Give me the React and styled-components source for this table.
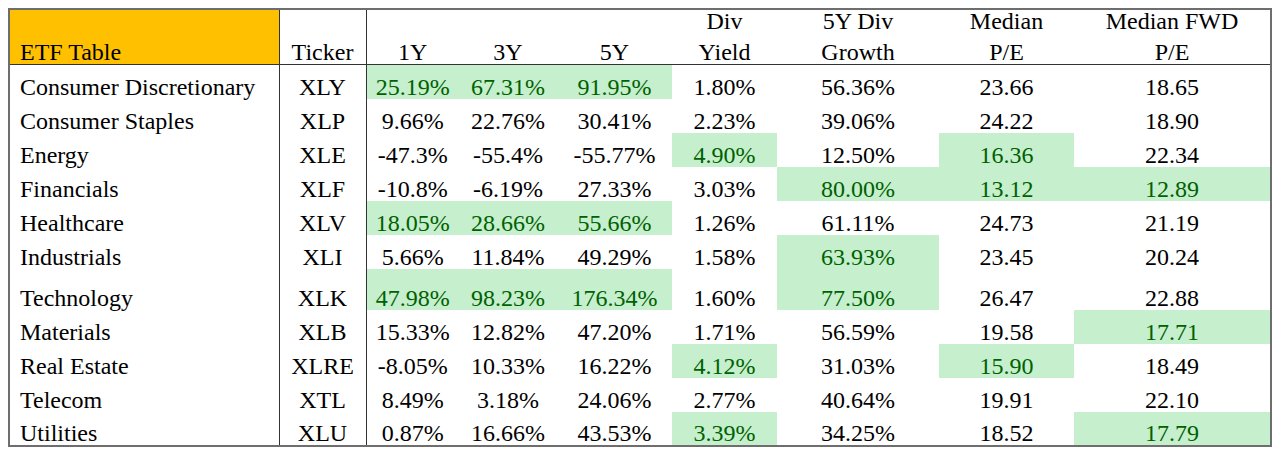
import React from 'react';
import styled, { createGlobalStyle } from 'styled-components';

const GlobalStyle = createGlobalStyle`
  body {
    margin: 8px;
    background: #fff;
    font-family: "Liberation Serif", "Times New Roman", serif;
    color: #000;
  }
`;

const Table = styled.table`
  border-collapse: collapse;
  table-layout: fixed;
  width: 1262px;
  border: 2px solid #6e6e6e;
  font-family: "Liberation Serif", "Times New Roman", serif;
  font-size: 24px;
  line-height: 23px;

  th,
  td {
    font-family: inherit;
    font-size: inherit;
  }
`;

const HeadRow = styled.tr`
  height: 54px;
  border-bottom: 1px solid #333;
`;

const BodyRow = styled.tr`
  height: ${(p) => (p.$tall ? 41 : 34)}px;
`;

const HeadCell = styled.th`
  font-weight: normal;
  vertical-align: bottom;
  line-height: 22px;
  padding: 0 0 1px;
  text-align: ${(p) => (p.$left ? 'left' : 'center')};
  background: ${(p) => (p.$accent ? '#ffc000' : 'transparent')};
  padding-left: ${(p) => (p.$left ? '10px' : '0')};
  border-right: ${(p) => (p.$divider ? '1px solid #333' : 'none')};
`;

const HeadLine = styled.span`
  display: block;
  & + & {
    margin-top: 9px;
  }
`;

const NameCell = styled.td`
  vertical-align: bottom;
  padding: 0 0 0 10px;
  white-space: nowrap;
  border-right: 1px solid #333;
`;

const TickerCell = styled.td`
  vertical-align: bottom;
  text-align: center;
  padding: 0;
  border-right: 1px solid #333;
`;

const ValueCell = styled.td`
  vertical-align: bottom;
  text-align: center;
  padding: 0;
  white-space: nowrap;
  background: ${(p) => (p.$good ? '#c6efce' : 'transparent')};
  color: ${(p) => (p.$good ? '#006100' : '#000')};
`;

const widths = [270, 87, 93, 98, 115, 105, 162, 135, 197];

const headers = [
  ['1Y'],
  ['3Y'],
  ['5Y'],
  ['Div', 'Yield'],
  ['5Y Div', 'Growth'],
  ['Median', 'P/E'],
  ['Median FWD', 'P/E'],
];

// values ending with * are the highlighted (best) cells
const rows = [
  ['Consumer Discretionary', 'XLY', '25.19%*', '67.31%*', '91.95%*', '1.80%', '56.36%', '23.66', '18.65'],
  ['Consumer Staples', 'XLP', '9.66%', '22.76%', '30.41%', '2.23%', '39.06%', '24.22', '18.90'],
  ['Energy', 'XLE', '-47.3%', '-55.4%', '-55.77%', '4.90%*', '12.50%', '16.36*', '22.34'],
  ['Financials', 'XLF', '-10.8%', '-6.19%', '27.33%', '3.03%', '80.00%*', '13.12*', '12.89*'],
  ['Healthcare', 'XLV', '18.05%*', '28.66%*', '55.66%*', '1.26%', '61.11%', '24.73', '21.19'],
  ['Industrials', 'XLI', '5.66%', '11.84%', '49.29%', '1.58%', '63.93%*', '23.45', '20.24'],
  ['Technology', 'XLK', '47.98%*', '98.23%*', '176.34%*', '1.60%', '77.50%*', '26.47', '22.88'],
  ['Materials', 'XLB', '15.33%', '12.82%', '47.20%', '1.71%', '56.59%', '19.58', '17.71*'],
  ['Real Estate', 'XLRE', '-8.05%', '10.33%', '16.22%', '4.12%*', '31.03%', '15.90*', '18.49'],
  ['Telecom', 'XTL', '8.49%', '3.18%', '24.06%', '2.77%', '40.64%', '19.91', '22.10'],
  ['Utilities', 'XLU', '0.87%', '16.66%', '43.53%', '3.39%*', '34.25%', '18.52', '17.79*'],
];

function App() {
  return (
    <>
      <GlobalStyle />
      <Table>
        <colgroup>
          {widths.map((w, i) => (
            <col key={i} style={{ width: w }} />
          ))}
        </colgroup>
        <thead>
          <HeadRow>
            <HeadCell $left $accent $divider>ETF Table</HeadCell>
            <HeadCell $divider>Ticker</HeadCell>
            {headers.map((lines) => (
              <HeadCell key={lines.join(' ')}>
                {lines.map((l) => (
                  <HeadLine key={l}>{l}</HeadLine>
                ))}
              </HeadCell>
            ))}
          </HeadRow>
        </thead>
        <tbody>
          {rows.map(([name, ticker, ...values]) => (
            <BodyRow key={ticker} $tall={name === 'Technology'}>
              <NameCell>{name}</NameCell>
              <TickerCell>{ticker}</TickerCell>
              {values.map((v, i) => {
                const good = v.endsWith('*');
                return (
                  <ValueCell key={i} $good={good}>
                    {good ? v.slice(0, -1) : v}
                  </ValueCell>
                );
              })}
            </BodyRow>
          ))}
        </tbody>
      </Table>
    </>
  );
}

export default App;
